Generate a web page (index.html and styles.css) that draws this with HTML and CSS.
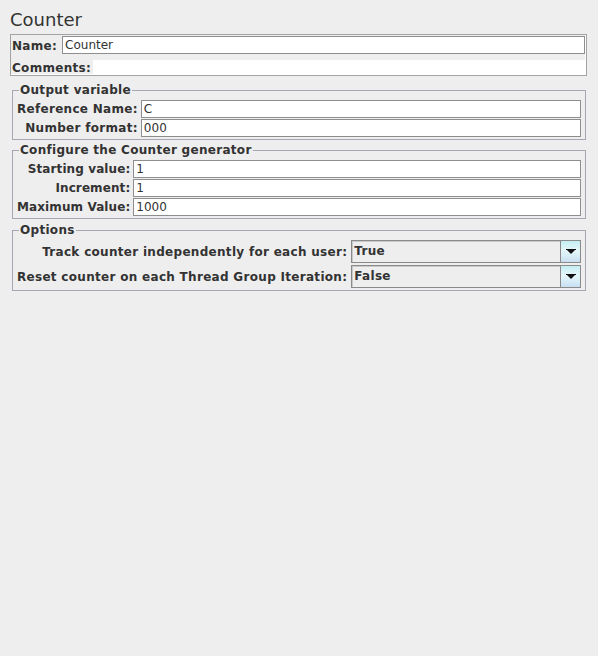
FILE: index.html
```html
<!DOCTYPE html>
<html>
<head>
<meta charset="utf-8">
<link rel="stylesheet" href="styles.css">
</head>
<body>
<div class="page">
  <div class="title">Counter</div>
  <div class="namepanel">
    <div class="namerow">
      <span class="lbl">Name:</span>
      <div class="field">Counter</div>
    </div>
    <div class="commentrow">
      <span class="lbl">Comments:</span>
      <div class="comment"></div>
    </div>
  </div>

  <div class="group g1">
    <span class="legend">Output variable</span>
    <div class="form">
      <span class="lbl">Reference Name:</span><div class="field">C</div>
      <span class="lbl">Number format:</span><div class="field">000</div>
    </div>
  </div>

  <div class="group g2">
    <span class="legend">Configure the Counter generator</span>
    <div class="form">
      <span class="lbl">Starting value:</span><div class="field">1</div>
      <span class="lbl">Increment:</span><div class="field">1</div>
      <span class="lbl">Maximum Value:</span><div class="field">1000</div>
    </div>
  </div>

  <div class="group g3">
    <span class="legend">Options</span>
    <div class="form options">
      <span class="lbl">Track counter independently for each user:</span>
      <div class="combo"><span class="cval">True</span><span class="cbtn"><svg width="10" height="6" viewBox="0 0 10 6"><path d="M0 0H10V1H9L5 5L1 1H0Z" fill="#111"/></svg></span></div>
      <span class="lbl">Reset counter on each Thread Group Iteration:</span>
      <div class="combo"><span class="cval">False</span><span class="cbtn"><svg width="10" height="6" viewBox="0 0 10 6"><path d="M0 0H10V1H9L5 5L1 1H0Z" fill="#111"/></svg></span></div>
    </div>
  </div>
</div>
</body>
</html>
```

FILE: styles.css
```css
html, body {
  margin: 0;
  padding: 0;
  background: #eeeeee;
}
body {
  font-family: "DejaVu Sans", sans-serif;
  font-size: 12px;
  color: #333333;
  width: 598px;
  height: 656px;
}
.page {
  display: flex;
  flex-direction: column;
}
.title {
  font-size: 18px;
  line-height: 22px;
  padding: 9px 0 0 10px;
  box-sizing: border-box;
  height: 34px;
}
.lbl {
  font-weight: bold;
  white-space: nowrap;
  line-height: 14px;
  letter-spacing: 0.3px;
}
.namepanel {
  margin: 0 11px 0 10px;
  height: 42px;
  box-sizing: border-box;
  border: 1px solid #a3a3a3;
  box-shadow: inset -1px -1px 0 #ffffff;
  padding: 1px 1px 0 1px;
  display: flex;
  flex-direction: column;
}
.namerow {
  display: flex;
  align-items: center;
  gap: 5px;
}
.namerow .lbl {
  padding-top: 2px;
}
.namerow .field {
  flex: 1;
}
.field {
  height: 18px;
  box-sizing: border-box;
  background: #ffffff;
  border: 1px solid #8e8e8e;
  padding: 0 2px;
  line-height: 16px;
  white-space: nowrap;
  overflow: hidden;
}
.commentrow {
  display: flex;
  align-items: stretch;
  gap: 2px;
  margin-top: 6px;
  height: 15px;
}
.commentrow .lbl {
  line-height: 15px;
  padding-top: 1px;
}
.comment {
  flex: 1;
  background: #ffffff;
  margin-right: -1px;
}
.group {
  margin: 10px 12px 0 12px;
  border: 1px solid #a7a7b3;
  padding: 0 4px 2px 4px;
  display: flex;
  flex-direction: column;
}
.g1 {
  margin-top: 14px;
}
.g3 {
  margin-top: 11px;
}
.g2 .lbl {
  letter-spacing: 0.1px;
}
.legend {
  align-self: flex-start;
  font-weight: bold;
  letter-spacing: 0.3px;
  line-height: 14px;
  margin: -8px 0 0 2px;
  padding: 0 1px;
  background: #eeeeee;
}
.form {
  margin-top: 3px;
  display: grid;
  grid-template-columns: auto 1fr;
  column-gap: 3px;
  row-gap: 1px;
  align-items: center;
}
.form .lbl {
  justify-self: end;
}
.options {
  row-gap: 2px;
  column-gap: 4px;
}
.combo {
  height: 23px;
  box-sizing: border-box;
  border: 1px solid #8a8a8a;
  box-shadow: inset 1px 1px 0 #c9c9c9;
  background: #eeeeee;
  display: flex;
  align-items: stretch;
}
.cval {
  flex: 1;
  font-weight: bold;
  letter-spacing: 0.3px;
  line-height: 21px;
  padding-left: 2px;
}
.cbtn {
  width: 19px;
  border-left: 1px solid #8a8a8a;
  background: linear-gradient(180deg, #c4eef4 0%, #e6f7fa 45%, #d7eef7 70%, #c9dff2 100%);
  display: flex;
  align-items: center;
  justify-content: center;
}
.cbtn svg {
  display: block;
}
```
